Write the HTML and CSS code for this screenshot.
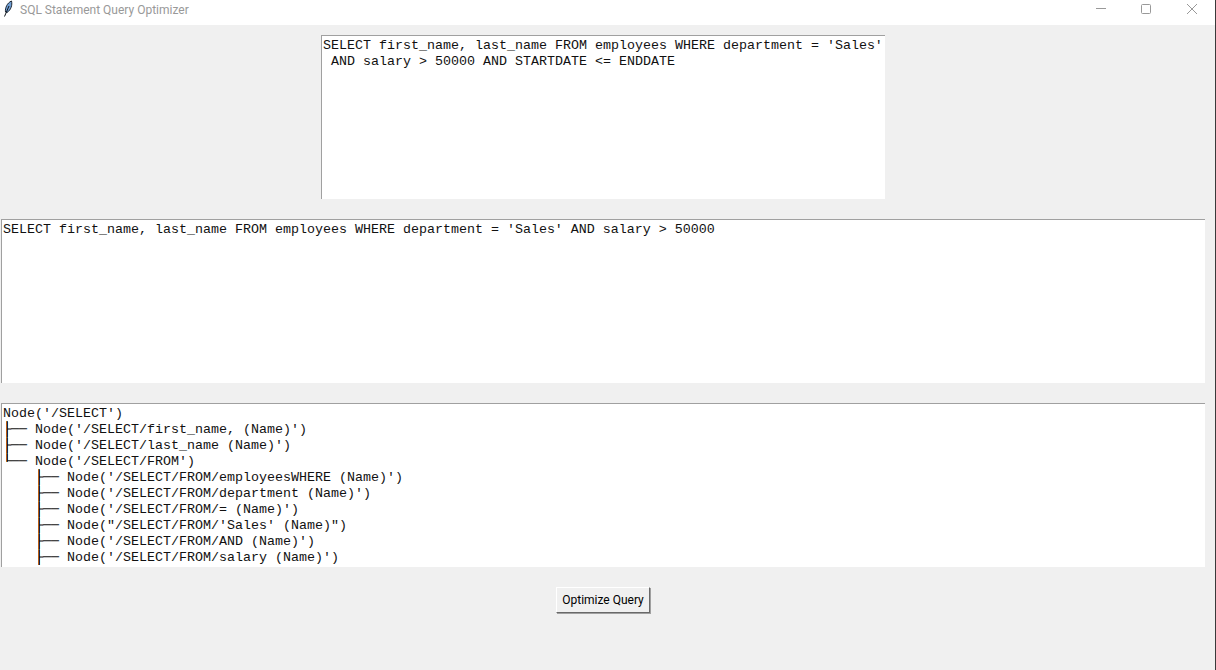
FILE: index.html
```html
<!DOCTYPE html>
<html lang="en">
<head>
<meta charset="utf-8">
<title>SQL Statement Query Optimizer</title>
<link rel="stylesheet" href="styles.css">
</head>
<body>
<div class="window">
  <header class="titlebar">
    <svg class="app-icon" width="16" height="18" viewBox="0 0 16 18">
      <path d="M3.5 12 C3 8 5 3 9.5 1 C10.5 5 9 10 5 12.5 Z" fill="#6f9fd6" stroke="#1c2530" stroke-width="1"/>
      <path d="M2.5 16.5 L7 6" stroke="#10161d" stroke-width="1" fill="none"/>
    </svg>
    <span class="title">SQL Statement Query Optimizer</span>
    <div class="controls">
      <svg class="control" width="46" height="25" viewBox="0 0 46 25"><path d="M19 8.5H29" stroke="#999" fill="none"/></svg>
      <svg class="control" width="46" height="25" viewBox="0 0 46 25"><rect x="18.5" y="4.5" width="9" height="9" rx="1" stroke="#999" fill="none"/></svg>
      <svg class="control" width="46" height="25" viewBox="0 0 46 25"><path d="M18 4L28 14M28 4L18 14" stroke="#999" fill="none"/></svg>
    </div>
  </header>
  <main class="content">
    <pre class="box box-input">SELECT first_name, last_name FROM employees WHERE department = 'Sales'
 AND salary &gt; 50000 AND STARTDATE &lt;= ENDDATE</pre>
    <pre class="box box-wide">SELECT first_name, last_name FROM employees WHERE department = 'Sales' AND salary &gt; 50000</pre>
    <pre class="box box-wide box-tree">Node('/SELECT')
├── Node('/SELECT/first_name, (Name)')
├── Node('/SELECT/last_name (Name)')
└── Node('/SELECT/FROM')
    ├── Node('/SELECT/FROM/employeesWHERE (Name)')
    ├── Node('/SELECT/FROM/department (Name)')
    ├── Node('/SELECT/FROM/= (Name)')
    ├── Node("/SELECT/FROM/'Sales' (Name)")
    ├── Node('/SELECT/FROM/AND (Name)')
    ├── Node('/SELECT/FROM/salary (Name)')</pre>
    <button class="action" type="button">Optimize Query</button>
  </main>
</div>
</body>
</html>
```
FILE: styles.css
```css
html, body {
  margin: 0;
  padding: 0;
  height: 100%;
  overflow: hidden;
}
.window {
  height: 670px;
  box-sizing: border-box;
  background: #f0f0f0;
  border-right: 1px solid #3a3a3a;
  display: flex;
  flex-direction: column;
}
.titlebar {
  height: 25px;
  background: #fff;
  display: flex;
  align-items: flex-start;
  flex: none;
}
.app-icon {
  margin: 0 0 0 2px;
  flex: none;
}
.title {
  margin-left: 2px;
  font: 12px/20px Roboto, sans-serif;
  color: #999;
}
.controls {
  margin-left: auto;
  display: flex;
}
.control {
  display: block;
}
.content {
  flex: 1;
  display: flex;
  flex-direction: column;
  align-items: flex-start;
  padding-top: 10px;
  gap: 20px;
}
.box {
  margin: 0;
  box-sizing: border-box;
  height: 164px;
  background: #fff;
  border-top: 1px solid #a0a0a0;
  border-left: 1px solid #a0a0a0;
  padding: 2px 0 0 1px;
  font: 13.333px/16px "Liberation Mono", monospace;
  color: #111;
  overflow: hidden;
  white-space: pre;
}
.box-input {
  width: 564px;
  margin-left: 321px;
}
.box-wide {
  width: 1204px;
  margin-left: 1px;
}
.box-tree {
  background-image:
    linear-gradient(#c47a12, #c47a12),
    linear-gradient(#1d4f7a, #1d4f7a),
    linear-gradient(#c47a12, #c47a12),
    linear-gradient(#1d4f7a, #1d4f7a);
  background-repeat: no-repeat;
  background-size: 1px 41px, 1px 41px, 1px 96px, 1px 96px;
  background-position: 4px 17px, 5px 17px, 36px 65px, 37px 65px;
}
.action {
  width: 94px;
  height: 26px;
  margin-left: 556px;
  padding: 0;
  box-sizing: border-box;
  background: #f0f0f0;
  border: 1px solid;
  border-color: #fff #696969 #696969 #fff;
  box-shadow: 1px 1px 0 #a0a0a0;
  font: 12px Roboto, sans-serif;
  color: #000;
}
```
